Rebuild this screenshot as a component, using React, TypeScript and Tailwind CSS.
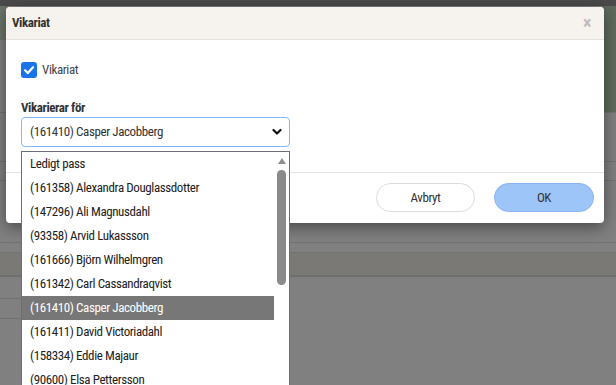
import React from "react";

const people = [
  "Ledigt pass",
  "(161358) Alexandra Douglassdotter",
  "(147296) Ali Magnusdahl",
  "(93358) Arvid Lukassson",
  "(161666) Björn Wilhelmgren",
  "(161342) Carl Cassandraqvist",
  "(161410) Casper Jacobberg",
  "(161411) David Victoriadahl",
  "(158334) Eddie Majaur",
  "(90600) Elsa Pettersson",
];

function Backdrop() {
  return (
    <div className="flex h-full flex-col">
      <div className="h-[6px] bg-[#4b4b4b]" />
      <div className="flex h-[107px] border-b border-[#727272]">
        <div className="h-[34px] w-[8px] bg-[#6b7669]" />
        <div className="flex-1" />
        <div className="w-[14px] bg-[#5f6b5d]" />
      </div>
      <div className="h-[49px] border-b border-[#727272]" />
      <div className="h-[19px] border-b border-[#727272]" />
      <div className="h-[62px] border-b border-[#727272]" />
      <div className="h-[10px] border-b border-[#727272]" />
      <div className="h-[24px] border-b-2 border-[#6f6f6f] bg-[#7b7975]" />
      <div className="h-[22px] w-[22px] border-b border-[#727272]" />
      <div className="h-[20px] w-[22px] border-b border-[#727272]" />
    </div>
  );
}

function Dialog() {
  return (
    <div className="absolute left-[6px] top-[7px] flex h-[216px] w-[598px] flex-col overflow-hidden rounded-[4px] bg-white shadow-[0_4px_16px_rgba(0,0,0,0.45)]">
      <div className="flex h-[33px] items-center justify-between border-b border-[#e3e3e3] bg-[#f6f3ee] pl-[6px] pr-[13px]">
        <span className="text-[13px] font-bold text-[#333]">Vikariat</span>
        <span className="text-[18px] font-bold leading-none text-[#bdbdbd]">×</span>
      </div>
      <div className="flex h-[132px] flex-col px-[15px] pt-[22px]">
        <label className="flex items-center gap-[5px] text-[13px] leading-[16px] text-[#444]">
          <span className="flex h-[16px] w-[16px] items-center justify-center rounded-[3px] bg-[#1a73e8]">
            <svg width="12" height="12" viewBox="0 0 12 12">
              <path d="M2 6.3 L4.8 9 L10 3.2" fill="none" stroke="white" strokeWidth="2.2" strokeLinecap="round" strokeLinejoin="round" />
            </svg>
          </span>
          Vikariat
        </label>
        <div className="mt-[22px] text-[13px] font-bold leading-[16px] text-[#333]">Vikarierar för</div>
        <div className="mt-[1px] flex h-[30px] w-[269px] items-center justify-between rounded-[4px] border border-[#86b7fe] pl-[8px] pr-[7px] text-[13px] text-[#333]">
          <span>(161410) Casper Jacobberg</span>
          <svg width="10" height="8" viewBox="0 0 10 8">
            <path d="M1.5 2 L5 5.5 L8.5 2" fill="none" stroke="#111" strokeWidth="2.2" strokeLinecap="round" strokeLinejoin="round" />
          </svg>
        </div>
      </div>
      <div className="flex flex-1 items-start justify-end gap-[19px] border-t border-[#e3e3e3] pr-[10px] pt-[10px]">
        <button className="h-[29px] w-[99px] rounded-full border border-[#dcdcdc] bg-white text-[13px] text-[#333]">Avbryt</button>
        <button className="h-[29px] w-[100px] rounded-full border border-[#86b3f2] bg-[#9ec5f7] text-[13px] text-[#333]">OK</button>
      </div>
    </div>
  );
}

function Dropdown() {
  return (
    <div className="absolute left-[21px] top-[151px] flex h-[250px] w-[269px] border border-[#6e6e6e] bg-white">
      <div className="flex flex-1 flex-col">
        {people.map((p) => (
          <div
            key={p}
            className={
              p === "(161410) Casper Jacobberg"
                ? "flex h-[24px] shrink-0 items-center bg-[#777777] pl-[8px] text-[13px] text-white"
                : "flex h-[24px] shrink-0 items-center pl-[8px] text-[13px] text-[#222]"
            }
          >
            {p}
          </div>
        ))}
      </div>
      <div className="flex w-[15px] flex-col items-center pt-[6px]">
        <svg width="8" height="6" viewBox="0 0 8 6">
          <path d="M0 6 L4 0 L8 6 Z" fill="#8e8e8e" />
        </svg>
        <div className="mt-[6px] h-[115px] w-[9px] rounded-full bg-[#8a8a8a]" />
      </div>
    </div>
  );
}

export default function App() {
  return (
    <div className="relative h-[385px] w-[616px] overflow-hidden bg-[#808080] font-['Roboto',sans-serif] tracking-[-0.4px] [font-stretch:75%]">
      <Backdrop />
      <Dialog />
      <Dropdown />
    </div>
  );
}
